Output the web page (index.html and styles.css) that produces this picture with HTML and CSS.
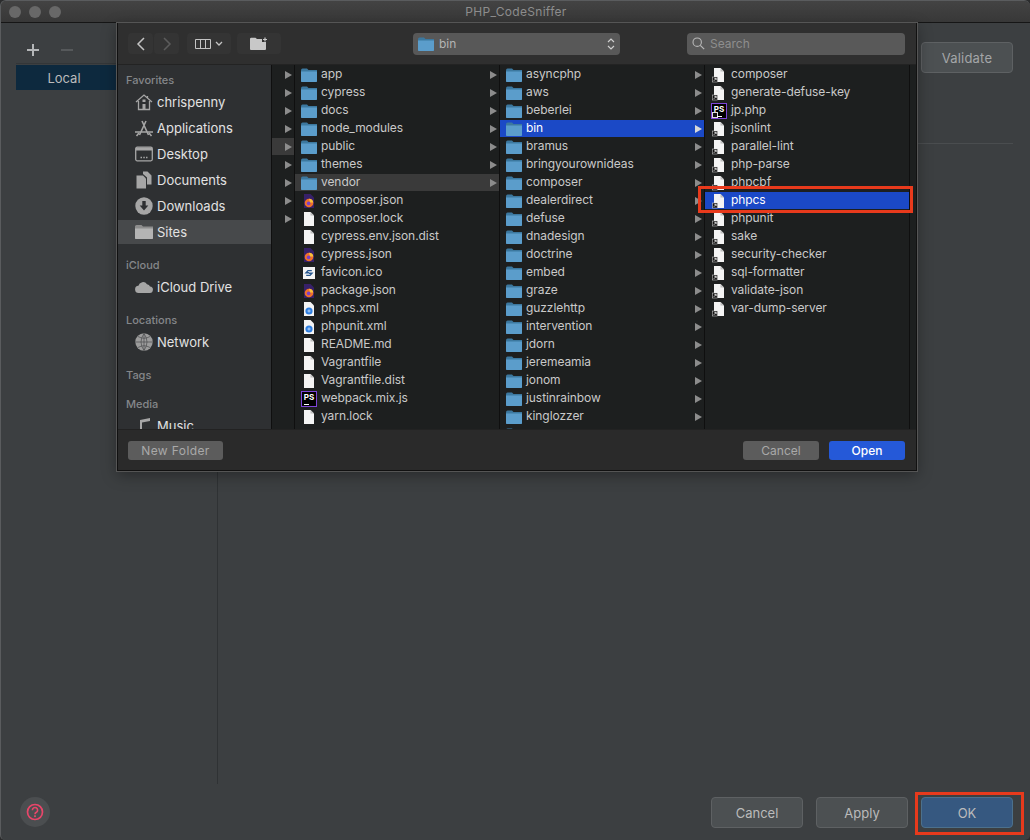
FILE: index.html
```html
<!DOCTYPE html>
<html lang="en">
<head>
    <meta charset="UTF-8">
    <title>PHP_CodeSniffer</title>
    <link rel="stylesheet" href="styles.css">
</head>
<body>

    <svg class="defs" width="0" height="0">
        <symbol id="folder" viewBox="0 0 16 16">
            <path d="M0 3.5 Q0 1.5 1.5 1.5 H6 L7.5 3 H16 V14 Q16 15 15 15 H1 Q0 15 0 14 Z" fill="#3c789f"/>
            <path d="M0 4.5 H16 V14 Q16 15 15 15 H1 Q0 15 0 14 Z" fill="#5b9dcb"/>
        </symbol>
        <symbol id="file" viewBox="0 0 16 16">
            <path d="M3 1 H9.5 L13 4.5 V15 H3 Z" fill="#f4f4f4"/>
            <path d="M9.5 1 L13 4.5 H9.5 Z" fill="#bdbdbd"/>
        </symbol>
        <symbol id="alias" viewBox="0 0 16 16">
            <path d="M3 1 H9.5 L13 4.5 V15 H3 Z" fill="#f4f4f4"/>
            <path d="M9.5 1 L13 4.5 H9.5 Z" fill="#bdbdbd"/>
            <rect x="1.5" y="10" width="5" height="5" fill="#111" stroke="#ddd" stroke-width="0.5"/>
            <path d="M2.8 13.8 L5 11.6 M3.4 11.4 H5.2 V13.2" stroke="#fff" stroke-width="0.8" fill="none"/>
        </symbol>
        <symbol id="firefox" viewBox="0 0 16 16">
            <path d="M3 1 H9.5 L13 4.5 V15 H3 Z" fill="#372068"/>
            <circle cx="8" cy="10" r="4.3" fill="#f0702a"/>
            <path d="M8 5.7 A4.3 4.3 0 0 1 12.3 9.6 L9 9.6 Z" fill="#f9c13c"/>
            <circle cx="7.6" cy="10.4" r="1.8" fill="#7a3fc8"/>
        </symbol>
        <symbol id="xml" viewBox="0 0 16 16">
            <path d="M3 1 H9.5 L13 4.5 V15 H3 Z" fill="#f4f4f4"/>
            <circle cx="8" cy="10" r="3.6" fill="#2f7fe0"/>
            <path d="M6.4 10 H9.6 M8 8.4 V11.6" stroke="#bcd8f8" stroke-width="0.9"/>
        </symbol>
        <symbol id="ico" viewBox="0 0 16 16">
            <rect x="2" y="2" width="12" height="12" fill="#f4f4f4"/>
            <path d="M10.8 5.6 H7 L5 7.8 H8 M5.2 10.4 H9 L11 8.2 H8" stroke="#27578f" stroke-width="1.4" fill="none"/>
        </symbol>
        <symbol id="home" viewBox="0 0 18 18">
            <path d="M1 9 L9 2 L17 9 M3.5 8 V16.5 H14.5 V8 M12.5 3 V5.5" stroke="#a6a6a6" stroke-width="1.3" fill="none"/>
            <rect x="7.5" y="11" width="3" height="5.5" fill="#a6a6a6"/>
            <rect x="7.5" y="6.5" width="3" height="2.5" fill="#a6a6a6"/>
        </symbol>
        <symbol id="apps" viewBox="0 0 18 18">
            <path d="M4.5 16 L11 2 M13.5 16 L7 2 M0 13 H18" stroke="#a6a6a6" stroke-width="1.6" fill="none"/>
            <path d="M1.5 17 L4 14 M16.5 17 L14 14" stroke="#a6a6a6" stroke-width="1.6"/>
        </symbol>
        <symbol id="desktop" viewBox="0 0 18 18">
            <rect x="0.7" y="2.2" width="16.6" height="13.6" rx="1.5" fill="none" stroke="#a6a6a6" stroke-width="1.3"/>
            <rect x="1" y="2.5" width="16" height="3" fill="#a6a6a6"/>
            <path d="M5.5 12.5 H7 M8.3 12.5 H9.8 M11 12.5 H12.5" stroke="#a6a6a6" stroke-width="1.3"/>
        </symbol>
        <symbol id="docs" viewBox="0 0 18 18">
            <path d="M1.5 4.5 H8 L11 7.5 V17.5 H1.5 Z" fill="#a6a6a6"/>
            <path d="M8 .5 H12.5 L16.5 4.5 V13.5 H12 V6.5 L8 3 Z" fill="#a6a6a6"/>
        </symbol>
        <symbol id="down" viewBox="0 0 18 18">
            <circle cx="9" cy="9" r="8.7" fill="#a6a6a6"/>
            <path d="M7.3 4 H10.7 V8.5 H13.3 L9 13.5 L4.7 8.5 H7.3 Z" fill="#2e3032"/>
        </symbol>
        <symbol id="sites" viewBox="0 0 18 18">
            <path d="M0 3.5 Q0 2 1.5 2 H6.5 L8 3.5 H18 V15 Q18 16 17 16 H1 Q0 16 0 15 Z" fill="#8d8d8d"/>
            <path d="M0 5.5 H18 V15 Q18 16 17 16 H1 Q0 16 0 15 Z" fill="#b4b4b4"/>
        </symbol>
        <symbol id="cloud" viewBox="0 0 18 18">
            <path d="M4 15 A3.6 3.6 0 0 1 3.4 7.8 A4.8 4.8 0 0 1 12 6.2 A3.2 3.2 0 0 1 15 8.6 A3.2 3.2 0 0 1 14.4 15 Z" fill="#a6a6a6"/>
        </symbol>
        <symbol id="globe" viewBox="0 0 18 18">
            <circle cx="9" cy="9" r="8.7" fill="#9c9c9c"/>
            <path d="M9 .5 V17.5 M.5 9 H17.5 M3 3.5 Q9 7 15 3.5 M3 14.5 Q9 11 15 14.5 M9 .5 Q3 9 9 17.5 M9 .5 Q15 9 9 17.5" stroke="#4a4c4e" stroke-width="0.7" fill="none"/>
        </symbol>
        <symbol id="music" viewBox="0 0 18 18">
            <path d="M5 3 L15 1 V4 L7 5.5 V18 H5 Z" fill="#a6a6a6"/>
        </symbol>
    </svg>

    <div class="window">
        <div class="titlebar">
            <div class="lights"><i></i><i></i><i></i></div>
            <span class="wintitle">PHP_CodeSniffer</span>
        </div>
        <div class="content">
            <div class="left">
                <div class="addbar">
                    <svg width="12" height="12" viewBox="0 0 12 12"><path d="M6 0 V12 M0 6 H12" stroke="#b4b6b8" stroke-width="2"/></svg>
                    <svg width="12" height="12" viewBox="0 0 12 12"><path d="M0 6 H12" stroke="#56595b" stroke-width="2"/></svg>
                </div>
                <div class="local">Local</div>
            </div>
            <div class="right">
                <div class="validate-row"><button class="idea faint">Validate</button></div>
                <div class="rule"></div>
            </div>
        </div>
        <div class="footer">
            <div class="help">
                <svg width="18" height="18" viewBox="0 0 18 18">
                    <circle cx="9" cy="9" r="7.5" fill="none" stroke="#e8466a" stroke-width="1.7"/>
                    <path d="M6.4 7.2 A2.6 2.6 0 1 1 10.4 9.3 Q9 10 9 11.2" fill="none" stroke="#e8466a" stroke-width="1.6"/>
                    <rect x="8.1" y="12.3" width="1.8" height="1.8" fill="#e8466a"/>
                </svg>
            </div>
            <div class="actions">
                <button class="idea">Cancel</button>
                <button class="idea">Apply</button>
                <button class="idea primary">OK</button>
            </div>
        </div>
    </div>

    <!-- open file sheet -->
    <div class="sheet">
        <div class="toolbar">
            <div class="navgroup">
                <button class="tool nav">
                    <svg width="10" height="14" viewBox="0 0 10 14"><path d="M8 1 L2 7 L8 13" fill="none" stroke="#c4c4c4" stroke-width="1.5"/></svg>
                </button>
                <button class="tool nav">
                    <svg width="10" height="14" viewBox="0 0 10 14"><path d="M2 1 L8 7 L2 13" fill="none" stroke="#5c5c5c" stroke-width="1.5"/></svg>
                </button>
            </div>
            <button class="tool viewbtn">
                <svg width="16" height="10" viewBox="0 0 16 10"><path d="M.5 .5 H15.5 V9.5 H.5 Z M5.5 .5 V9.5 M10.5 .5 V9.5" fill="none" stroke="#c4c4c4"/></svg>
                <svg width="8" height="6" viewBox="0 0 8 6"><path d="M1 1 L4 4 L7 1" fill="none" stroke="#c4c4c4" stroke-width="1.3"/></svg>
            </button>
            <button class="tool newbtn">
                <svg width="18" height="13" viewBox="0 0 18 13"><path d="M0 2 Q0 .7 1.2 .7 H5.5 L7 2 H12 V5 H16 V12 Q16 13 15 13 H1 Q0 13 0 12 Z" fill="#c8c8c8"/><path d="M15 .5 V4.5 M13 2.5 H17" stroke="#c8c8c8" stroke-width="1.2"/></svg>
            </button>
            <div class="pathpop">
                <svg class="ic"><use href="#folder"/></svg>
                <span class="pathname">bin</span>
                <svg class="updown" width="8" height="14" viewBox="0 0 8 14"><path d="M1 5 L4 2 L7 5 M1 9 L4 12 L7 9" fill="none" stroke="#d0d0d0" stroke-width="1.2"/></svg>
            </div>
            <div class="search">
                <svg width="13" height="13" viewBox="0 0 13 13"><circle cx="5.2" cy="5.2" r="4.2" fill="none" stroke="#b8b8b8" stroke-width="1.1"/><path d="M8.3 8.3 L12.2 12.2" stroke="#b8b8b8" stroke-width="1.2"/></svg>
                <span>Search</span>
            </div>
        </div>

        <div class="browser">
            <div class="sidebar">
                <div class="sidehead first">Favorites</div>
                <div class="sideitem"><svg class="sic"><use href="#home"/></svg>chrispenny</div>
                <div class="sideitem"><svg class="sic"><use href="#apps"/></svg>Applications</div>
                <div class="sideitem"><svg class="sic"><use href="#desktop"/></svg>Desktop</div>
                <div class="sideitem"><svg class="sic"><use href="#docs"/></svg>Documents</div>
                <div class="sideitem"><svg class="sic"><use href="#down"/></svg>Downloads</div>
                <div class="sideitem on"><svg class="sic"><use href="#sites"/></svg>Sites</div>
                <div class="sidehead">iCloud</div>
                <div class="sideitem"><svg class="sic"><use href="#cloud"/></svg>iCloud Drive</div>
                <div class="sidehead">Locations</div>
                <div class="sideitem"><svg class="sic"><use href="#globe"/></svg>Network</div>
                <div class="sidehead">Tags</div>
                <div class="sidehead">Media</div>
                <div class="sideitem"><svg class="sic"><use href="#music"/></svg>Music</div>
            </div>

            <div class="col gutter">
                <div class="row arrow"></div>
                <div class="row arrow"></div>
                <div class="row arrow"></div>
                <div class="row arrow"></div>
                <div class="row arrow dim"></div>
                <div class="row arrow"></div>
                <div class="row arrow"></div>
                <div class="row arrow"></div>
                <div class="row arrow"></div>
            </div>

            <div class="col col1">
                <div class="row arrow"><svg class="ic"><use href="#folder"/></svg>app</div>
                <div class="row arrow"><svg class="ic"><use href="#folder"/></svg>cypress</div>
                <div class="row arrow"><svg class="ic"><use href="#folder"/></svg>docs</div>
                <div class="row arrow"><svg class="ic"><use href="#folder"/></svg>node_modules</div>
                <div class="row arrow"><svg class="ic"><use href="#folder"/></svg>public</div>
                <div class="row arrow"><svg class="ic"><use href="#folder"/></svg>themes</div>
                <div class="row arrow dim"><svg class="ic"><use href="#folder"/></svg>vendor</div>
                <div class="row"><svg class="ic"><use href="#firefox"/></svg>composer.json</div>
                <div class="row"><svg class="ic"><use href="#file"/></svg>composer.lock</div>
                <div class="row"><svg class="ic"><use href="#file"/></svg>cypress.env.json.dist</div>
                <div class="row"><svg class="ic"><use href="#firefox"/></svg>cypress.json</div>
                <div class="row"><svg class="ic"><use href="#ico"/></svg>favicon.ico</div>
                <div class="row"><svg class="ic"><use href="#firefox"/></svg>package.json</div>
                <div class="row"><svg class="ic"><use href="#xml"/></svg>phpcs.xml</div>
                <div class="row"><svg class="ic"><use href="#xml"/></svg>phpunit.xml</div>
                <div class="row"><svg class="ic"><use href="#file"/></svg>README.md</div>
                <div class="row"><svg class="ic"><use href="#file"/></svg>Vagrantfile</div>
                <div class="row"><svg class="ic"><use href="#file"/></svg>Vagrantfile.dist</div>
                <div class="row"><span class="ps">PS</span>webpack.mix.js</div>
                <div class="row"><svg class="ic"><use href="#file"/></svg>yarn.lock</div>
            </div>

            <div class="col col2">
                <div class="row arrow"><svg class="ic"><use href="#folder"/></svg>asyncphp</div>
                <div class="row arrow"><svg class="ic"><use href="#folder"/></svg>aws</div>
                <div class="row arrow"><svg class="ic"><use href="#folder"/></svg>beberlei</div>
                <div class="row arrow sel"><svg class="ic"><use href="#folder"/></svg>bin</div>
                <div class="row arrow"><svg class="ic"><use href="#folder"/></svg>bramus</div>
                <div class="row arrow"><svg class="ic"><use href="#folder"/></svg>bringyourownideas</div>
                <div class="row arrow"><svg class="ic"><use href="#folder"/></svg>composer</div>
                <div class="row arrow"><svg class="ic"><use href="#folder"/></svg>dealerdirect</div>
                <div class="row arrow"><svg class="ic"><use href="#folder"/></svg>defuse</div>
                <div class="row arrow"><svg class="ic"><use href="#folder"/></svg>dnadesign</div>
                <div class="row arrow"><svg class="ic"><use href="#folder"/></svg>doctrine</div>
                <div class="row arrow"><svg class="ic"><use href="#folder"/></svg>embed</div>
                <div class="row arrow"><svg class="ic"><use href="#folder"/></svg>graze</div>
                <div class="row arrow"><svg class="ic"><use href="#folder"/></svg>guzzlehttp</div>
                <div class="row arrow"><svg class="ic"><use href="#folder"/></svg>intervention</div>
                <div class="row arrow"><svg class="ic"><use href="#folder"/></svg>jdorn</div>
                <div class="row arrow"><svg class="ic"><use href="#folder"/></svg>jeremeamia</div>
                <div class="row arrow"><svg class="ic"><use href="#folder"/></svg>jonom</div>
                <div class="row arrow"><svg class="ic"><use href="#folder"/></svg>justinrainbow</div>
                <div class="row arrow"><svg class="ic"><use href="#folder"/></svg>kinglozzer</div>
                <div class="row arrow"><svg class="ic"><use href="#folder"/></svg>league</div>
            </div>

            <div class="col col3">
                <div class="row"><svg class="ic"><use href="#alias"/></svg>composer</div>
                <div class="row"><svg class="ic"><use href="#alias"/></svg>generate-defuse-key</div>
                <div class="row"><span class="ps alias">PS</span>jp.php</div>
                <div class="row"><svg class="ic"><use href="#alias"/></svg>jsonlint</div>
                <div class="row"><svg class="ic"><use href="#alias"/></svg>parallel-lint</div>
                <div class="row"><svg class="ic"><use href="#alias"/></svg>php-parse</div>
                <div class="row"><svg class="ic"><use href="#alias"/></svg>phpcbf</div>
                <div class="row sel"><svg class="ic"><use href="#alias"/></svg>phpcs</div>
                <div class="row"><svg class="ic"><use href="#alias"/></svg>phpunit</div>
                <div class="row"><svg class="ic"><use href="#alias"/></svg>sake</div>
                <div class="row"><svg class="ic"><use href="#alias"/></svg>security-checker</div>
                <div class="row"><svg class="ic"><use href="#alias"/></svg>sql-formatter</div>
                <div class="row"><svg class="ic"><use href="#alias"/></svg>validate-json</div>
                <div class="row"><svg class="ic"><use href="#alias"/></svg>var-dump-server</div>
            </div>
        </div>

        <div class="sheetbar">
            <button class="mac spread">New Folder</button>
            <span class="spacer"></span>
            <button class="mac wide">Cancel</button>
            <button class="mac wide blue">Open</button>
        </div>
    </div>

    <div class="mark mark-file"></div>
    <div class="mark mark-ok"></div>

</body>
</html>
```

FILE: styles.css
```css
* {
    box-sizing: border-box;
}
html, body {
    margin: 0;
    height: 840px;
    overflow: hidden;
    background: #2b2c2d;
}
body {
    font-family: Inter, "Liberation Sans", sans-serif;
    font-size: 12px;
    position: relative;
}
button {
    font-family: inherit;
    padding: 0;
}
.defs {
    position: absolute;
}

/* ide window behind the sheet */
.window {
    height: 840px;
    display: flex;
    flex-direction: column;
    background: #3c3f41;
    border-radius: 6px 6px 5px 5px;
    border: 1px solid #5a5c5e;
    border-width: 1px 0 0 1px;
    overflow: hidden;
}
.titlebar {
    height: 22px;
    flex: none;
    display: flex;
    align-items: center;
    background: linear-gradient(#434343, #383838);
    border-bottom: 1px solid #161616;
}
.lights {
    display: flex;
    gap: 8px;
    padding-left: 8px;
}
.lights i {
    width: 12px;
    height: 12px;
    border-radius: 50%;
    background: #686868;
}
.wintitle {
    flex: 1;
    text-align: center;
    color: #8e8e8e;
    letter-spacing: 0.3px;
    padding-right: 59px;
}
.content {
    flex: 1;
    display: flex;
}
.left {
    width: 217px;
    border-right: 1px solid #2f3234;
    padding: 14px 99px 0 15px;
}
.addbar {
    height: 27px;
    border-bottom: 1px solid #333638;
    display: flex;
    align-items: center;
    gap: 22px;
    padding-left: 11px;
    width: 102px;
}
.local {
    width: 101px;
    height: 25px;
    margin-top: 1px;
    padding-right: 5px;
    background: #0d293e;
    color: #bbbbbb;
    font-size: 13px;
    display: flex;
    align-items: center;
    justify-content: center;
}
.right {
    flex: 1;
    padding: 19px 17px 0 0;
}
.validate-row {
    display: flex;
    justify-content: flex-end;
}
.rule {
    height: 1px;
    background: #4a4d4f;
    margin: 70px 0 0 auto;
    width: 98px;
}
.footer {
    height: 56px;
    flex: none;
    display: flex;
    align-items: flex-start;
    justify-content: space-between;
    padding: 13px 17px 0 19px;
}
.help {
    width: 30px;
    height: 30px;
    border-radius: 50%;
    background: #4b4e50;
    display: flex;
    align-items: center;
    justify-content: center;
}
.actions {
    display: flex;
    gap: 13px;
}
.idea {
    width: 92px;
    height: 31px;
    background: #4c5052;
    border: 1px solid #5e6163;
    border-radius: 4px;
    color: #bbbbbb;
    font-size: 13px;
}
.idea.faint {
    color: #a4a6a8;
    letter-spacing: 0.2px;
}
.idea.primary {
    background: #365880;
    border-color: #4c708c;
}

/* file sheet */
.sheet {
    position: absolute;
    left: 117px;
    top: 23px;
    width: 800px;
    height: 448px;
    display: flex;
    flex-direction: column;
    background: #2b2b2b;
    border: 1px solid #111;
    border-top: none;
    box-shadow: 0 0 0 1px #555, 0 4px 14px rgba(0, 0, 0, 0.35);
}
.toolbar {
    height: 42px;
    flex: none;
    display: flex;
    align-items: center;
    background: #2f2f2f;
    padding-left: 10px;
    border-bottom: 1px solid #232323;
}
.tool {
    height: 21px;
    background: #343434;
    border: none;
    border-radius: 4px;
    display: flex;
    align-items: center;
    justify-content: center;
}
.navgroup {
    display: flex;
    gap: 1px;
}
.nav {
    width: 25px;
}
.viewbtn {
    width: 44px;
    gap: 4px;
    margin-left: 8px;
}
.newbtn {
    width: 44px;
    margin-left: 6px;
}
.pathpop {
    width: 207px;
    height: 22px;
    margin-left: 132px;
    background: #585858;
    border-radius: 4px;
    display: flex;
    align-items: center;
    padding: 0 5px;
    gap: 5px;
    color: #b4b4b4;
}
.updown {
    margin-left: auto;
}
.search {
    width: 218px;
    height: 22px;
    margin-left: 67px;
    background: #595959;
    border-radius: 4px;
    display: flex;
    align-items: center;
    padding-left: 5px;
    gap: 5px;
    color: #8e8e8e;
}
.browser {
    flex: 1;
    min-height: 0;
    display: flex;
    background: #1d1f1f;
    overflow: hidden;
}
.sidebar {
    width: 154px;
    flex: none;
    display: flex;
    flex-direction: column;
    background: #2e3032;
    border-right: 1px solid #0f0f0f;
    overflow: hidden;
}
.sidehead {
    flex: none;
    height: 29px;
    padding: 13px 0 0 8px;
    font-size: 11px;
    font-weight: 500;
    color: #85878a;
}
.sidehead.first {
    height: 24px;
    padding-top: 8px;
}
.sideitem {
    flex: none;
    height: 24px;
    margin: 1px 0;
    display: flex;
    align-items: center;
    padding-left: 17px;
    gap: 4px;
    color: #e2e2e2;
    font-size: 13px;
}
.sideitem.on {
    background: #47494b;
}
.sic {
    width: 18px;
    height: 18px;
    flex: none;
}
.col {
    flex: none;
    overflow: hidden;
    padding-top: 1px;
    border-right: 1px solid #0f0f0f;
}
.gutter {
    width: 23px;
}
.col1, .col2, .col3 {
    width: 205px;
}
.row {
    height: 17px;
    margin-bottom: 1px;
    display: flex;
    align-items: center;
    gap: 4px;
    padding: 0 2px 2px 6px;
    color: #c9c9c9;
    letter-spacing: -0.07px;
    white-space: nowrap;
}
.row.arrow::after {
    content: "";
    margin: 2px 0 0 auto;
    border-left: 7px solid #8c8c8c;
    border-top: 4px solid transparent;
    border-bottom: 4px solid transparent;
}
.row.dim {
    background: #3a3a3a;
}
.row.sel {
    background: #1b49c6;
    color: #fff;
}
.row.sel.arrow::after {
    border-left-color: #d8d8d8;
}
.ic {
    width: 16px;
    height: 16px;
    flex: none;
    margin: 2px 0 0;
}
.pathpop .ic {
    margin: 0;
}
.ps {
    width: 16px;
    height: 16px;
    flex: none;
    margin-top: 2px;
    background: #000;
    border: 1px solid #7d45d8;
    color: #fff;
    font-size: 8px;
    font-weight: 700;
    line-height: 10px;
    text-align: center;
    position: relative;
}
.ps::after {
    content: "";
    position: absolute;
    left: 2px;
    bottom: 1px;
    width: 5px;
    height: 1px;
    background: #fff;
}
.ps.alias::before {
    content: "";
    position: absolute;
    left: 0;
    bottom: 0;
    width: 4px;
    height: 4px;
    background: #111;
    border: 1px solid #ddd;
}
.ps.alias::after {
    left: 5px;
}
.sheetbar {
    height: 41px;
    flex: none;
    display: flex;
    align-items: center;
    gap: 10px;
    padding: 0 11px 0 10px;
    background: #2a2a2a;
    border-top: 1px solid #222;
}
.spacer {
    flex: 1;
}
.mac {
    width: 95px;
    height: 19px;
    border: none;
    border-radius: 3px;
    background: #5c5c5c;
    color: #a9a9a9;
    font-size: 12px;
}
.mac.spread {
    letter-spacing: 0.4px;
}
.mac.wide {
    width: 76px;
}
.mac.blue {
    background: #2559d8;
    color: #fff;
    font-weight: 500;
}

/* red annotation boxes */
.mark {
    position: absolute;
    border: 3px solid #e83a1c;
}
.mark-file {
    left: 698px;
    top: 186px;
    width: 215px;
    height: 27px;
}
.mark-ok {
    left: 915px;
    top: 792px;
    width: 109px;
    height: 43px;
}
```
